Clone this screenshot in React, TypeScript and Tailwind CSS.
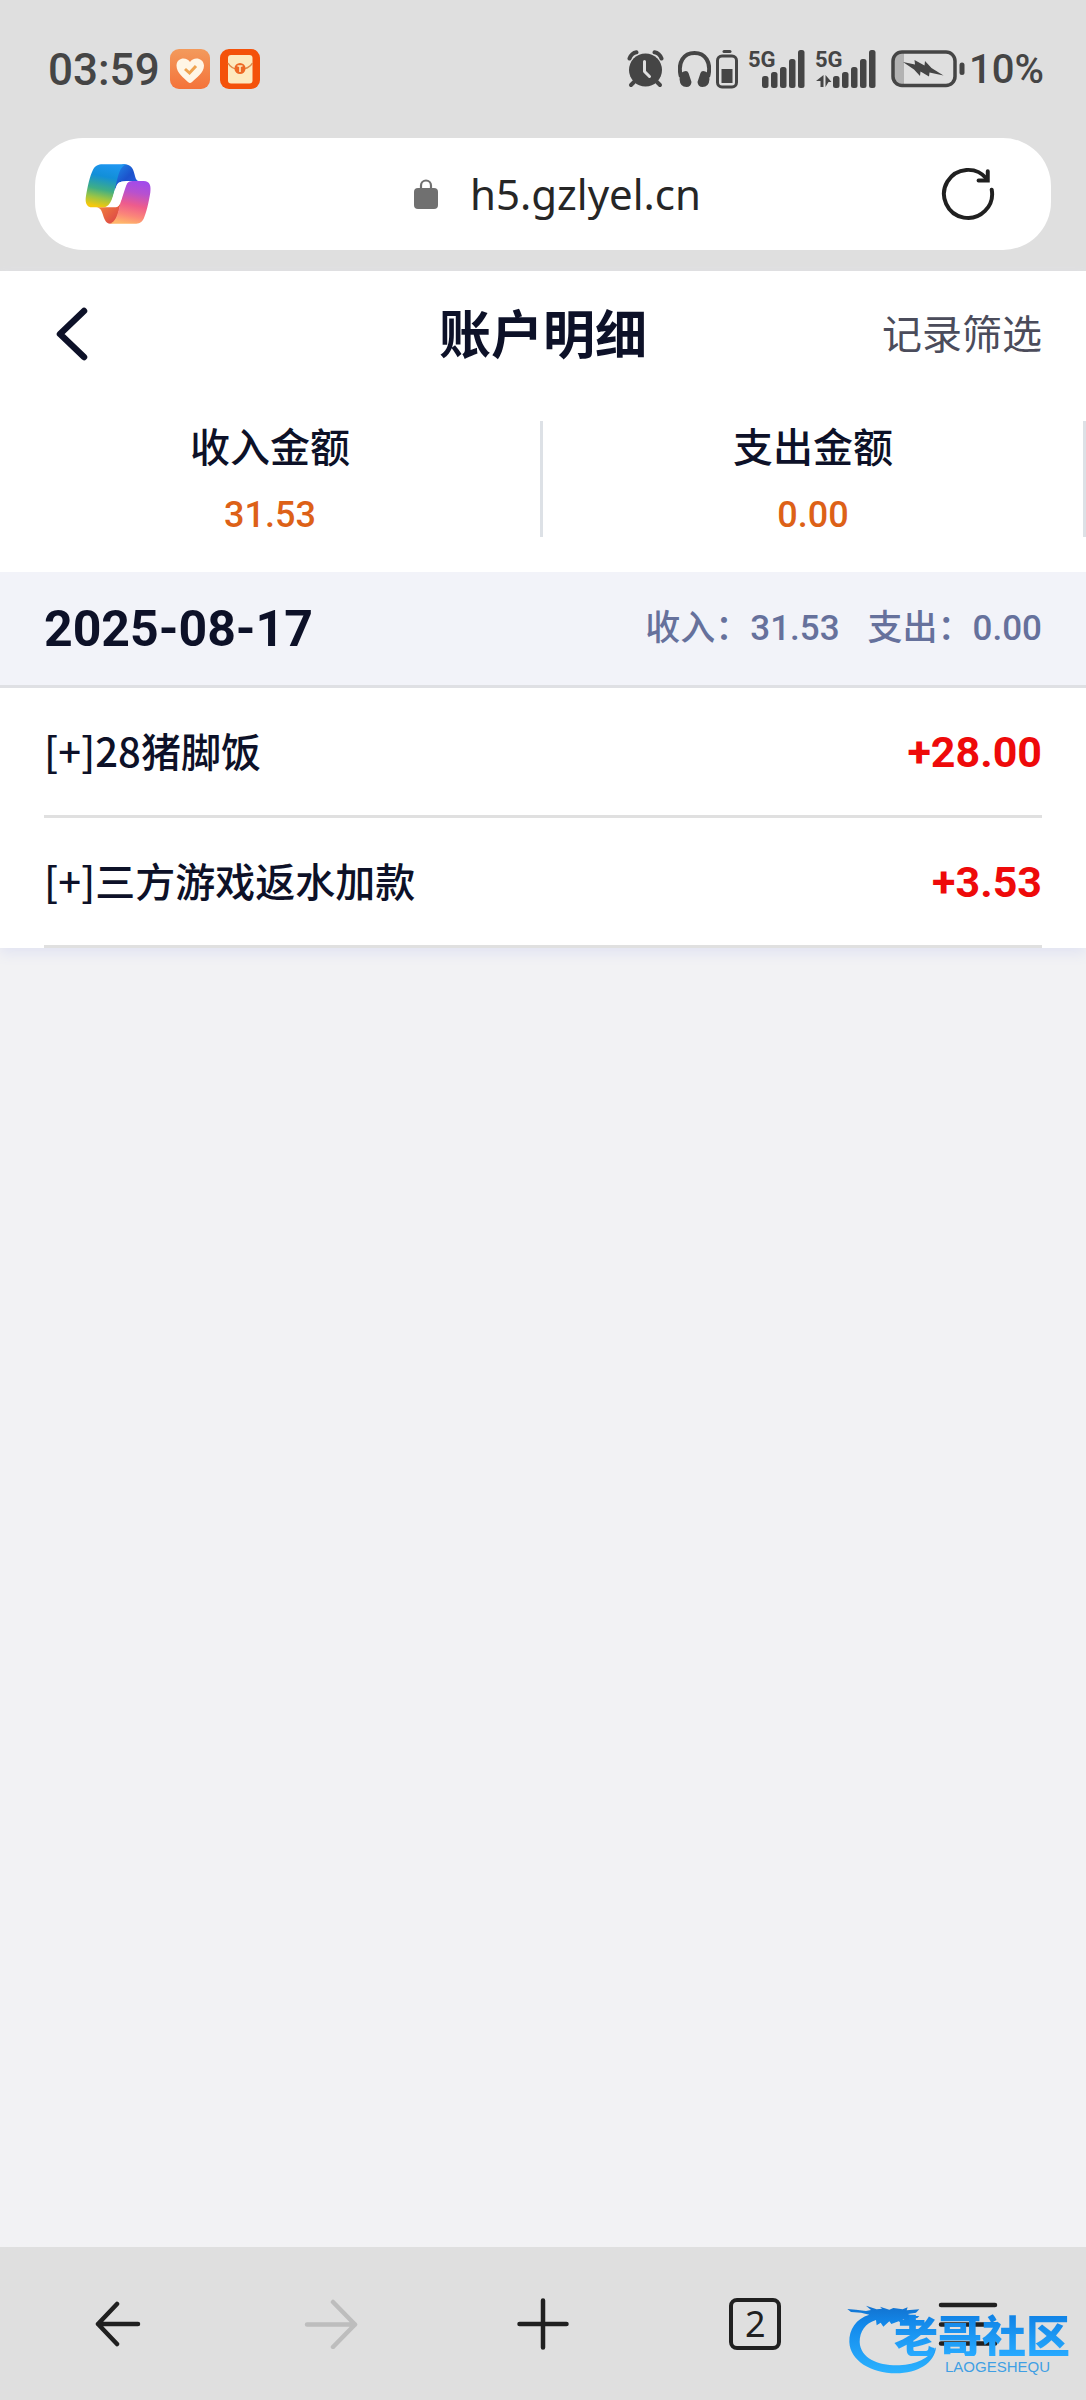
import React from "react";

const cjk = "font-['Noto_Sans_CJK_SC','Noto_Sans',sans-serif]";

const totals = [
  { label: "收入金额", value: "31.53" },
  { label: "支出金额", value: "0.00" },
];

const records = [
  { name: "[+]28猪脚饭", amount: "+28.00" },
  { name: "[+]三方游戏返水加款", amount: "+3.53" },
];

function HeartAppIcon() {
  return (
    <svg width="40" height="40" viewBox="0 0 40 40" aria-hidden="true">
      <defs>
        <linearGradient id="heart-bg" x1="0" y1="0" x2="0" y2="1">
          <stop offset="0" stopColor="#f39a5c" />
          <stop offset="1" stopColor="#f4733a" />
        </linearGradient>
      </defs>
      <rect width="40" height="40" rx="9" fill="url(#heart-bg)" />
      <path d="M20 13C17 8 7 8 6.500 16.500C6.500 24 14 29 18 33Q20 35 22 33C26 29 34 24 34 16.500C33 8 23 8 20 13Z" fill="#fff6e6" />
      <path d="M15 20l4.500 4L26 17" fill="none" stroke="#efa24e" strokeWidth="3" />
    </svg>
  );
}

function EnvelopeAppIcon() {
  return (
    <svg width="40" height="40" viewBox="0 0 40 40" aria-hidden="true">
      <rect width="40" height="40" rx="9" fill="#f4520a" />
      <rect x="8" y="6" width="24.500" height="28.500" rx="3" fill="#fdeabf" />
      <path d="M8 14C10 18 15 20.500 20 20.500S30.500 18 32.500 14" fill="none" stroke="#e08a4a" strokeWidth="1.500" />
      <circle cx="20" cy="19.500" r="5.500" fill="#ee6a26" />
      <path d="M17.500 17h5M20 17v6" stroke="#fdeabf" strokeWidth="1.600" />
    </svg>
  );
}

function AlarmIcon() {
  return (
    <svg width="37" height="38" viewBox="0 0 37 38" fill="none" aria-hidden="true">
      <circle cx="18.500" cy="20" r="16.500" fill="#454545" />
      <path d="M2.500 8.500Q4.500 3 9.500 2.200M34.500 8.500Q32.500 3 27.500 2.200" stroke="#454545" strokeWidth="4" strokeLinecap="round" />
      <path d="M7 32l-3 3M30 32l3 3" stroke="#454545" strokeWidth="4" strokeLinecap="round" />
      <path d="M17.500 11.500v10l5 5" stroke="#dfdfdf" strokeWidth="3" strokeLinecap="round" strokeLinejoin="round" />
    </svg>
  );
}

function HeadphonesIcon() {
  return (
    <svg width="33" height="38" viewBox="0 0 33 38" fill="none" aria-hidden="true">
      <path d="M3 27C-1 12 6 3 16.500 3S34 12 30 27" stroke="#454545" strokeWidth="4" />
      <path d="M3 23Q9 19 10.500 23L13.500 32Q13 37 8.500 37Q2 37 1.500 29ZM30 23Q24 19 22.500 23L19.500 32Q20 37 24.500 37Q31 37 31.500 29Z" fill="#454545" />
    </svg>
  );
}

function SmallBatteryIcon() {
  return (
    <svg width="22" height="40" viewBox="0 0 22 40" fill="none" aria-hidden="true">
      <path d="M8 2.500h6" stroke="#454545" strokeWidth="3" strokeLinecap="round" />
      <rect x="1.500" y="7" width="19" height="31" rx="4.500" stroke="#454545" strokeWidth="3" />
      <rect x="5.500" y="20" width="11" height="14" fill="#454545" />
    </svg>
  );
}

function SignalIcon({ transfer }: { transfer?: boolean }) {
  return (
    <svg width={transfer ? 62 : 58} height="54" viewBox={transfer ? "-2 -8 62 54" : "-2 -8 58 54"} aria-hidden="true">
      <text x="-1" y="17" className="font-['Roboto',sans-serif] text-[22px] font-bold" fill="#454545">
        5G
      </text>
      {transfer && <path d="M7.500 25v12h-3v-6H0zM9.500 25l6 7h-3l-3 5z" fill="#454545" />}
      <g transform={transfer ? "translate(4 0)" : undefined} fill="#454545">
        <rect x="13" y="26" width="6.500" height="12" rx="2.500" />
        <rect x="22" y="22" width="6.500" height="16" rx="2.500" />
        <rect x="31" y="17" width="6.500" height="21" rx="2.500" />
        <rect x="40" y="9" width="6.500" height="29" rx="2.500" />
        <rect x="49" y="0" width="6.500" height="38" rx="2.500" />
      </g>
    </svg>
  );
}

function ChargingBatteryIcon() {
  return (
    <svg width="74" height="38" viewBox="0 0 74 38" aria-hidden="true">
      <path d="M12 3h1v31h-1Q3 34 3 26V11Q3 3 12 3z" fill="#b2b2b2" />
      <rect x="2" y="2" width="62" height="33.500" rx="9" fill="none" stroke="#454545" strokeWidth="3.500" />
      <rect x="68.500" y="12.500" width="5" height="12.500" rx="2.500" fill="#454545" />
      <path d="M12 12l12 2.500-.5-4.500 10 5.500.5-4.500 6.500 7 12 7.500-14-3-.5 4-8.500-5-.5 4.500-6-6.500z" fill="#454545" />
    </svg>
  );
}

function CopilotLogo() {
  return (
    <svg width="66" height="60" viewBox="254 133 198 180" aria-hidden="true">
      <defs>
        <linearGradient id="cp-a" x1="0.600" y1="0" x2="0.400" y2="1">
          <stop offset="0" stopColor="#1e96f0" />
          <stop offset="0.300" stopColor="#128fd8" />
          <stop offset="0.600" stopColor="#3fae86" />
          <stop offset="0.800" stopColor="#9cc544" />
          <stop offset="1" stopColor="#f5c80c" />
        </linearGradient>
        <linearGradient id="cp-b" x1="0" y1="0" x2="1" y2="1">
          <stop offset="0" stopColor="#1f8be8" />
          <stop offset="0.500" stopColor="#1c52cc" />
          <stop offset="1" stopColor="#2b62e6" />
        </linearGradient>
        <linearGradient id="cp-c" x1="0.600" y1="0" x2="0.400" y2="1">
          <stop offset="0" stopColor="#a24bea" />
          <stop offset="0.250" stopColor="#b751cf" />
          <stop offset="0.550" stopColor="#ee5c8c" />
          <stop offset="0.800" stopColor="#fb8679" />
          <stop offset="1" stopColor="#ffb56a" />
        </linearGradient>
        <linearGradient id="cp-d" x1="0" y1="0" x2="1" y2="1">
          <stop offset="0" stopColor="#f7913a" />
          <stop offset="1" stopColor="#d93d48" />
        </linearGradient>
      </defs>
      <path d="M372 134C394 134 399 150 403 165C406 178 409 184 418 184H378C356 184 351 192 343 214C345 165 352 134 372 134Z" fill="url(#cp-b)" />
      <path d="M288 263H344C354 263 359 252 363 238C354 290 346 312 330 312C315 312 311 295 307 283C303 270 299 265 288 263Z" fill="url(#cp-d)" />
      <path d="M307 134H380C360 138 355 162 348 190C339 226 333 263 309 263H277C256 263 254 245 257 228C262 200 268 170 278 150C285 138 293 134 307 134Z" fill="url(#cp-a)" />
      <path d="M430 184C450 184 452 200 450 218C445 250 438 280 430 297C424 309 416 312 403 312H328C346 308 351 286 358 260C367 226 371 184 396 184Z" fill="url(#cp-c)" />
      <path d="M382 186C374 204 366 236 359 252C355 261 350 262 344 262H327C335 248 342 214 348 200C352 188 358 186 368 186Z" fill="#fff" />
    </svg>
  );
}

function LockIcon() {
  return (
    <svg width="24" height="30" viewBox="0 0 24 30" aria-hidden="true">
      <rect y="9" width="24" height="21" rx="4" fill="#707070" />
      <path d="M7 10V6.500a5 5 0 0 1 10 0V10" fill="none" stroke="#707070" strokeWidth="2.200" />
    </svg>
  );
}

function WatermarkDragon() {
  return (
    <svg width="90" height="70" viewBox="473 222 270 210" aria-hidden="true">
      <defs>
        <linearGradient id="dragon" x1="0" y1="0" x2="0" y2="1">
          <stop offset="0" stopColor="#1272cf" />
          <stop offset="0.300" stopColor="#138aec" />
          <stop offset="1" stopColor="#2bb2ff" />
        </linearGradient>
      </defs>
      <path
        d="M474 237L500 239L530 243L545 240L530 227L562 238L578 236L572 230L600 239L612 234L640 238L655 232L652 241L690 238L680 248L656 252L668 258L690 258L684 264L668 266L682 276L655 274L640 268L648 286L628 274L606 282L600 274L582 290L574 278L562 286L560 270C528 280 511 304 511 336C513 386 570 408 630 406C680 404 718 386 740 352C736 400 685 430 620 430C545 430 482 392 480 336C479 298 500 266 540 254L515 248L485 246Z"
        fill="url(#dragon)"
      />
    </svg>
  );
}

function StatusBar() {
  return (
    <div className="flex h-[138px] items-center justify-between pr-[42px] pl-12 text-[#454545]">
      <div className="flex items-center gap-[10px]">
        <span className="pt-0.5 text-[44px] leading-none font-medium">03:59</span>
        <HeartAppIcon />
        <EnvelopeAppIcon />
      </div>
      <div className="flex items-center">
        <AlarmIcon />
        <div className="ml-[14px] flex items-center gap-[5px]">
          <HeadphonesIcon />
          <SmallBatteryIcon />
        </div>
        <div className="ml-[9px] flex items-center gap-[9px]">
          <SignalIcon />
          <SignalIcon transfer />
        </div>
        <div className="ml-[15px] flex items-center gap-1">
          <ChargingBatteryIcon />
          <span className="pt-0.5 text-[40px] leading-none font-medium">10%</span>
        </div>
      </div>
    </div>
  );
}

function AddressBar() {
  return (
    <div className="px-[35px] pb-[21px]">
      <div className="flex h-28 items-center rounded-[48px] bg-white pr-[55px] pl-[50px]">
        <button type="button" aria-label="Copilot">
          <CopilotLogo />
        </button>
        <label className="flex flex-1 items-center justify-center gap-8 pl-6">
          <LockIcon />
          <input
            type="text"
            aria-label="网址"
            defaultValue="h5.gzlyel.cn"
            className="field-sizing-content bg-transparent font-['Noto_Sans',sans-serif] text-[42px] leading-[56px] text-[#262626] outline-none"
          />
        </label>
        <button type="button" aria-label="刷新">
          <svg width="56" height="56" viewBox="642 137 170 170" fill="none" stroke="#202020" strokeWidth="12" strokeLinecap="round" aria-hidden="true">
            <path d="M799 209A73 73 0 1 1 784 176" />
            <path d="M787 153V181H759" />
          </svg>
        </button>
      </div>
    </div>
  );
}

function BottomNav() {
  return (
    <nav className="relative grid h-[153px] grid-cols-5 items-center bg-[#dfdfdf] px-3 text-[#202020]">
      <button type="button" aria-label="后退" className="flex justify-center">
        <svg width="46" height="46" viewBox="0 0 46 46" fill="none" stroke="currentColor" strokeWidth="4.500" strokeLinecap="round" strokeLinejoin="round">
          <path d="M22 3L3 23L22 43M3 23H43" />
        </svg>
      </button>
      <button type="button" aria-label="前进" disabled className="flex justify-center text-[#bdbdbd]">
        <svg width="54" height="50" viewBox="0 0 54 50" fill="none" stroke="currentColor" strokeWidth="4.500" strokeLinecap="round" strokeLinejoin="round">
          <path d="M29 3L51 25.500L29 48M3 25.500H51" />
        </svg>
      </button>
      <button type="button" aria-label="新标签页" className="flex justify-center">
        <svg width="52" height="52" viewBox="0 0 52 52" fill="none" stroke="currentColor" strokeWidth="4.500" strokeLinecap="round">
          <path d="M26 2.500V49.500M2.500 26H49.500" />
        </svg>
      </button>
      <button type="button" aria-label="标签页" className="flex justify-center">
        <span className="flex size-[52px] items-center justify-center rounded-lg border-4 border-[#202020] font-['Noto_Sans',sans-serif] text-[36px] leading-none">
          2
        </span>
      </button>
      <button type="button" aria-label="菜单" className="flex justify-center">
        <svg width="60" height="44" viewBox="0 0 60 44" fill="none" stroke="currentColor" strokeWidth="4.500" strokeLinecap="round">
          <path d="M3 3H57M3 22.500H57M3 41.500H57" />
        </svg>
      </button>
      <div className="pointer-events-none absolute top-[57px] right-4 flex">
        <WatermarkDragon />
        <div className="-ml-[43px] flex flex-col items-end gap-1 pt-2">
          <span className={`${cjk} bg-linear-to-b from-[#0f80e4] to-[#27aaff] bg-clip-text text-[44px] leading-[44px] font-black text-transparent`}>
            老哥社区
          </span>
          <span className="pr-5 font-['Liberation_Sans',sans-serif] text-[15px] leading-[14px] text-[#3f9fe4]">LAOGESHEQU</span>
        </div>
      </div>
    </nav>
  );
}

export default function App() {
  return (
    <div className="flex min-h-screen flex-col bg-[#f2f2f4] font-['Roboto','Noto_Sans_CJK_SC',sans-serif] text-[#0d1128]">
      <div className="bg-[#dfdfdf]">
        <StatusBar />
        <AddressBar />
      </div>

      <main className="flex-1">
        <div className="bg-white shadow-[0_6px_12px_#e2e4f2]">
          <header className="grid h-[126px] grid-cols-3 items-center px-11">
            <button type="button" aria-label="返回" className="justify-self-start">
              <svg width="58" height="56" viewBox="0 0 58 56" fill="none" stroke="currentColor" strokeWidth="6.500" strokeLinecap="round" strokeLinejoin="round">
                <path d="M40 5L16 28L40 51" />
              </svg>
            </button>
            <h1 className={`${cjk} pb-1 text-center text-[52px] leading-[64px] font-bold`}>账户明细</h1>
            <button type="button" className={`${cjk} justify-self-end pb-1 text-[40px] leading-[56px] text-[#4b4c5b]`}>
              记录筛选
            </button>
          </header>

          <dl className="grid grid-cols-2 pt-6 pb-[35px]">
            {totals.map((t) => (
              <div key={t.label} className="flex h-[116px] flex-col items-center border-r-[3px] border-[#dde1e6]">
                <dt className={`${cjk} text-[40px] leading-[48px] font-medium`}>{t.label}</dt>
                <dd className="pt-5 text-[36px] leading-[52px] font-medium text-[#dd6117]">{t.value}</dd>
              </div>
            ))}
          </dl>

          <section>
            <div className="flex h-[116px] items-center justify-between border-b-[3px] border-[#dfe0e4] bg-[#f2f3f9] px-11">
              <h2 className="text-[50px] leading-none font-bold">2025-08-17</h2>
              <p className="flex gap-7 text-[35px] leading-[48px] font-medium text-[#66719c]">
                <span>收入：31.53</span>
                <span>支出：0.00</span>
              </p>
            </div>
            <ul className="px-11">
              {records.map((r) => (
                <li key={r.name} className="flex h-[130px] items-center justify-between border-b-[3px] border-[#e0e0e0]">
                  <span className={`${cjk} pb-1 text-[40px] leading-[56px] font-medium`}>{r.name}</span>
                  <span className="text-[43px] leading-[56px] font-bold text-[#ee0a0a]">{r.amount}</span>
                </li>
              ))}
            </ul>
          </section>
        </div>
      </main>

      <BottomNav />
    </div>
  );
}
